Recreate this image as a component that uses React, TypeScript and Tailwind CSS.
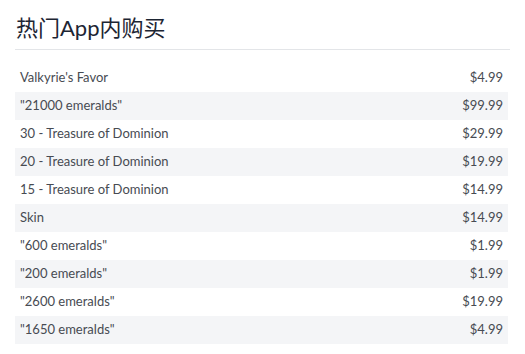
const items = [
  { name: "Valkyrie's Favor", price: "$4.99" },
  { name: '"21000 emeralds"', price: "$99.99" },
  { name: "30 - Treasure of Dominion", price: "$29.99" },
  { name: "20 - Treasure of Dominion", price: "$19.99" },
  { name: "15 - Treasure of Dominion", price: "$14.99" },
  { name: "Skin", price: "$14.99" },
  { name: '"600 emeralds"', price: "$1.99" },
  { name: '"200 emeralds"', price: "$1.99" },
  { name: '"2600 emeralds"', price: "$19.99" },
  { name: '"1650 emeralds"', price: "$4.99" },
];

export default function App() {
  return (
    <div className="w-[525px] h-[354px] bg-white px-[15px] pt-[12px] font-['Lato','Noto_Sans_CJK_SC',sans-serif]">
      <h2 className="text-[22px] leading-[32px] text-[#1d2533] pl-px pb-[5px] border-b border-[#e3e5e8]">
        热门App内购买
      </h2>
      <div className="mt-[14px] w-[493px]">
        {items.map((item, i) => (
          <div
            key={i}
            className={
              "flex justify-between items-center h-[28px] pl-[5px] pr-[5px] text-[13px] text-[#474b52] " +
              (i % 2 === 1 ? "bg-[#f4f5f7]" : "bg-white")
            }
          >
            <span>{item.name}</span>
            <span>{item.price}</span>
          </div>
        ))}
      </div>
    </div>
  );
}
